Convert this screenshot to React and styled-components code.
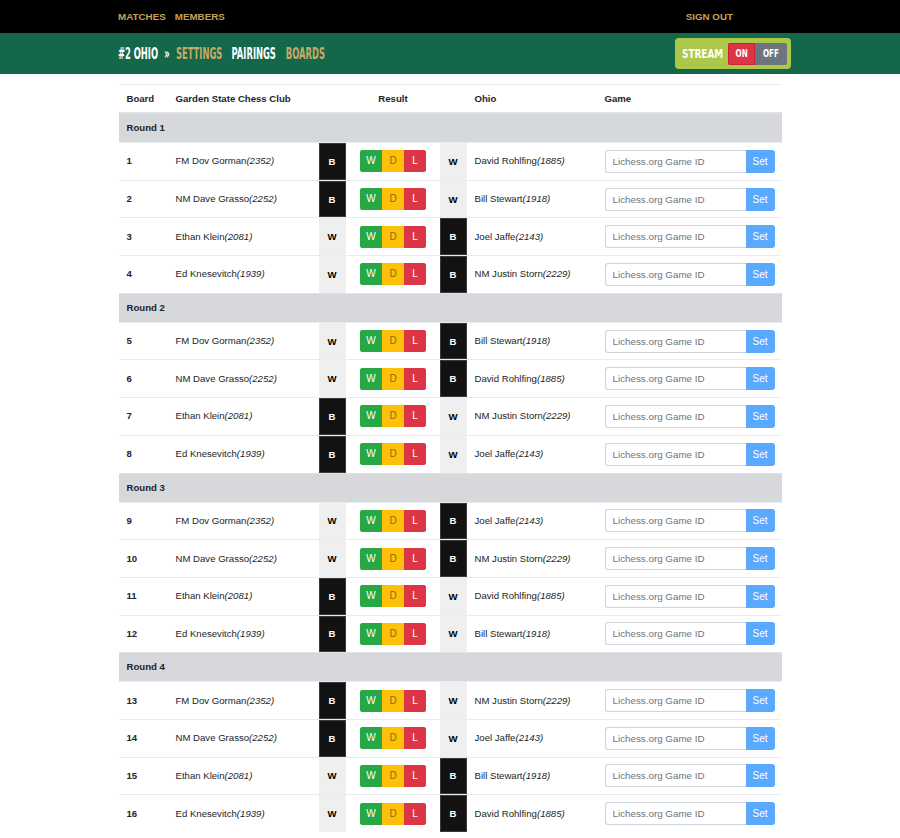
import React from 'react';
import styled, { createGlobalStyle } from 'styled-components';

const GlobalStyle = createGlobalStyle`
  body {
    margin: 0;
    background: #fff;
    font-family: "Liberation Sans", Arial, sans-serif;
    font-size: 9.6px;
    color: #212529;
  }
`;

const TopBar = styled.div`
  background: #000;
  height: 33px;
  display: flex;
  align-items: center;
  padding: 0 167px 0 118px;
`;

const TopLink = styled.a`
  color: #c4a05a;
  font-weight: bold;
  font-size: 9.8px;
  text-transform: uppercase;
  margin-right: 9px;
  ${p => p.$right && 'margin-left: auto; margin-right: 0;'}
`;

const SubBar = styled.div`
  background: #13684a;
  height: 41px;
  display: flex;
  align-items: center;
  justify-content: space-between;
  padding: 0 109px 0 118px;
`;

const Squeeze = styled.div`
  display: flex;
  align-items: center;
  gap: ${p => p.$gap || 0}px;
  font-family: "DejaVu Sans Condensed", "DejaVu Sans", sans-serif;
  font-weight: bold;
  font-size: ${p => p.$size || 15}px;
  white-space: nowrap;
  transform: scaleX(${p => p.$k || 0.62});
  transform-origin: ${p => p.$origin || 'left center'};
`;

const Crumb = styled.span`
  color: ${p => (p.$gold ? '#c8a968' : '#fff')};
  margin-right: ${p => p.$mr || 0}px;
`;

const StreamBox = styled.div`
  width: 116px;
  height: 31px;
  box-sizing: border-box;
  background: #abc84b;
  border-radius: 4px;
  display: flex;
  align-items: center;
  padding: 0 4px 0 7px;
`;

const StreamLabel = styled.div`
  width: 46px;
  color: #fff;
  flex-shrink: 0;
`;

const ToggleBtn = styled.div`
  width: ${p => p.$w}px;
  height: 22px;
  display: flex;
  align-items: center;
  justify-content: center;
  color: #fff;
  background: ${p => p.$bg};
  border-radius: ${p => p.$radius};
  ${p => p.$on && 'box-shadow: inset 0 0 0 1px #c82333;'}
`;

const Wrap = styled.div`
  width: 663px;
  margin: 10px auto 0;
`;

const Table = styled.table`
  width: 100%;
  border-collapse: collapse;
  table-layout: fixed;
`;

const Th = styled.th`
  text-align: ${p => p.$align || 'left'};
  font-weight: bold;
  line-height: 14px;
  padding: 6.5px 7px 6.5px 8px;
  border-top: 1px solid #e9ecef;
  border-bottom: 2px solid #dee2e6;
`;

const RoundCell = styled.td`
  background: #d6d8db;
  font-weight: bold;
  line-height: 14px;
  padding: 7px 8px;
  border-top: 1px solid #dee2e6;
`;

const Td = styled.td`
  padding: 6.85px 7px 6.85px 8px;
  line-height: 14px;
  vertical-align: middle;
  text-align: ${p => p.$align || 'left'};
  border-top: 1px solid #e9ecef;
  white-space: nowrap;
`;

const ColorCell = styled.td`
  padding: 0;
  text-align: center;
  vertical-align: middle;
  font-weight: bold;
  border-top: 1px solid #e9ecef;
  background: ${p => (p.$black ? '#121212' : '#efefef')};
  color: ${p => (p.$black ? '#fff' : '#000')};
  ${p => p.$black && 'box-shadow: inset 0 0 0 1px #3a3a3a;'}
`;

const ResultGroup = styled.div`
  display: inline-flex;
  border-radius: 3px;
  overflow: hidden;
  vertical-align: middle;
`;

const ResultBtn = styled.div`
  width: 22px;
  height: 22px;
  box-sizing: border-box;
  display: flex;
  align-items: center;
  justify-content: center;
  font-size: 10px;
  background: ${p => p.$bg};
  color: ${p => p.$fg};
  border: 1px solid ${p => p.$border};
`;

const InputGroup = styled.div`
  display: flex;
  height: 23px;
`;

const GameInput = styled.input`
  width: 141px;
  height: 23px;
  box-sizing: border-box;
  border: 1px solid #ced4da;
  border-right: none;
  border-radius: 3px 0 0 3px;
  padding: 0 7px;
  font-family: "Liberation Sans", Arial, sans-serif;
  font-size: 9.8px;
  color: #495057;
  outline: none;
  &::placeholder { color: #6c757d; }
`;

const SetBtn = styled.button`
  width: 29px;
  height: 23px;
  border: none;
  border-radius: 0 3px 3px 0;
  background: #59a9ff;
  color: #fff;
  font-family: "Liberation Sans", Arial, sans-serif;
  font-size: 10px;
  padding: 0;
`;

const players = [
  ['FM Dov Gorman', '2352'],
  ['NM Dave Grasso', '2252'],
  ['Ethan Klein', '2081'],
  ['Ed Knesevitch', '1939'],
];

const ohio = {
  dr: ['David Rohlfing', '1885'],
  bs: ['Bill Stewart', '1918'],
  jj: ['Joel Jaffe', '2143'],
  js: ['NM Justin Storn', '2229'],
};

// [home colour, ohio opponent] per board, one list per round
const rounds = [
  [['B', 'dr'], ['B', 'bs'], ['W', 'jj'], ['W', 'js']],
  [['W', 'bs'], ['W', 'dr'], ['B', 'js'], ['B', 'jj']],
  [['W', 'jj'], ['W', 'js'], ['B', 'dr'], ['B', 'bs']],
  [['B', 'js'], ['B', 'jj'], ['W', 'bs'], ['W', 'dr']],
];

const Name = ({ p }) => (
  <>
    {p[0]}<i>({p[1]})</i>
  </>
);

export default function App() {
  let board = 0;
  return (
    <>
      <GlobalStyle />
      <TopBar>
        <TopLink>Matches</TopLink>
        <TopLink>Members</TopLink>
        <TopLink $right>Sign Out</TopLink>
      </TopBar>
      <SubBar>
        <Squeeze $k={0.62}>
          <Crumb $mr={10}>#2 OHIO</Crumb>
          <Crumb $mr={10}>»</Crumb>
          <Crumb $gold $mr={15}>SETTINGS</Crumb>
          <Crumb $mr={16}>PAIRINGS</Crumb>
          <Crumb $gold>BOARDS</Crumb>
        </Squeeze>
        <StreamBox>
          <StreamLabel>
            <Squeeze $size={13} $k={0.76}>STREAM</Squeeze>
          </StreamLabel>
          <ToggleBtn $w={27} $bg="#dc3545" $radius="2px 0 0 2px" $on>
            <Squeeze $size={10} $k={0.8} $origin="center">ON</Squeeze>
          </ToggleBtn>
          <ToggleBtn $w={32} $bg="#6c757d" $radius="0 2px 2px 0">
            <Squeeze $size={10} $k={0.8} $origin="center">OFF</Squeeze>
          </ToggleBtn>
        </StreamBox>
      </SubBar>
      <Wrap>
        <Table>
          <colgroup>
            <col style={{ width: 49 }} />
            <col style={{ width: 151 }} />
            <col style={{ width: 27 }} />
            <col style={{ width: 94 }} />
            <col style={{ width: 27 }} />
            <col style={{ width: 130 }} />
            <col style={{ width: 185 }} />
          </colgroup>
          <thead>
            <tr>
              <Th>Board</Th>
              <Th>Garden State Chess Club</Th>
              <Th colSpan={3} $align="center">Result</Th>
              <Th>Ohio</Th>
              <Th>Game</Th>
            </tr>
          </thead>
          <tbody>
            {rounds.map((r, ri) => (
              <React.Fragment key={ri}>
                <tr>
                  <RoundCell colSpan={7}>Round {ri + 1}</RoundCell>
                </tr>
                {r.map(([col, opp], i) => {
                  board += 1;
                  const homeBlack = col === 'B';
                  return (
                    <tr key={i}>
                      <Td><b>{board}</b></Td>
                      <Td><Name p={players[i]} /></Td>
                      <ColorCell $black={homeBlack}>{homeBlack ? 'B' : 'W'}</ColorCell>
                      <Td $align="center">
                        <ResultGroup>
                          <ResultBtn $bg="#28a745" $fg="#fff" $border="#28a745">W</ResultBtn>
                          <ResultBtn $bg="#ffc107" $fg="#85681c" $border="#ffc107">D</ResultBtn>
                          <ResultBtn $bg="#dc3545" $fg="#fff" $border="#dc3545">L</ResultBtn>
                        </ResultGroup>
                      </Td>
                      <ColorCell $black={!homeBlack}>{homeBlack ? 'W' : 'B'}</ColorCell>
                      <Td><Name p={ohio[opp]} /></Td>
                      <Td>
                        <InputGroup>
                          <GameInput placeholder="Lichess.org Game ID" />
                          <SetBtn>Set</SetBtn>
                        </InputGroup>
                      </Td>
                    </tr>
                  );
                })}
              </React.Fragment>
            ))}
          </tbody>
        </Table>
      </Wrap>
    </>
  );
}
